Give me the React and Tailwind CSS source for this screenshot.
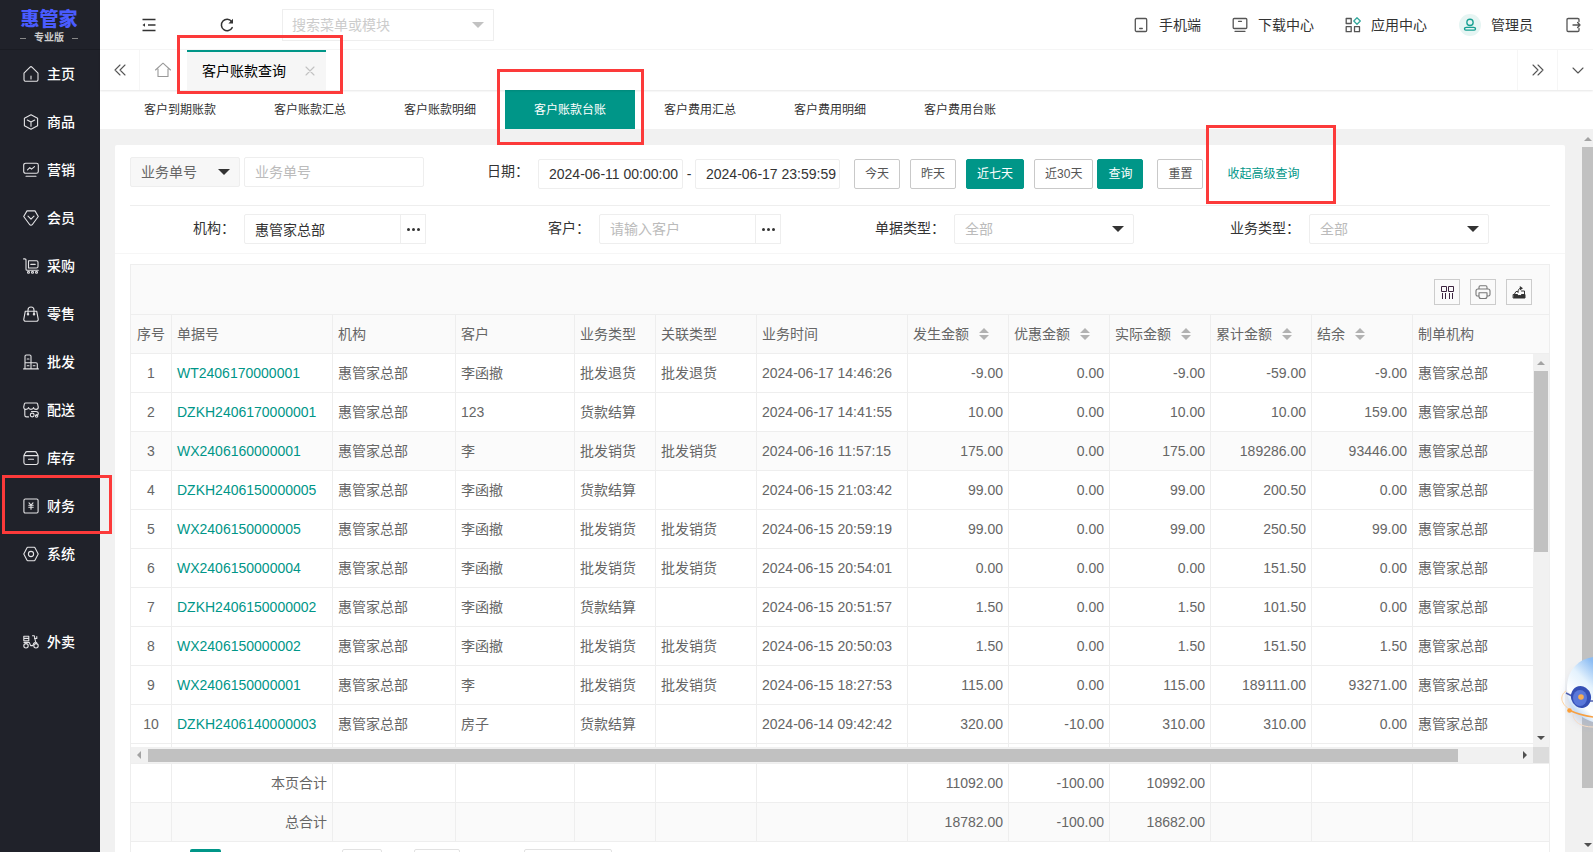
import { useState } from 'react';

const Icon = ({ size = 16, width = 1.1, className = '', children }) => (
    <svg
        width={size}
        height={size}
        viewBox="0 0 16 16"
        fill="none"
        stroke="currentColor"
        strokeWidth={width}
        strokeLinecap="round"
        strokeLinejoin="round"
        className={`shrink-0 ${className}`}
        aria-hidden="true"
    >
        {children}
    </svg>
);

const menus = [
    {
        name: '主页',
        icon: <path d="M1 7.2 6.8 1.3a1.7 1.7 0 0 1 2.4 0L15 7.2v6.3a1.8 1.8 0 0 1-1.8 1.8H2.8a1.8 1.8 0 0 1-1.8-1.8ZM8 10v3" />,
    },
    {
        name: '商品',
        icon: <path d="M8 .8 14.6 4.3v7.4L8 15.3 1.4 11.7V4.3ZM4.3 6 8 8.1 11.7 6M8 8.1v4.2" />,
    },
    {
        name: '营销',
        icon: <path d="M2.6 1.2h10.8a1.9 1.9 0 0 1 1.9 1.9v6.3a1.9 1.9 0 0 1-1.9 1.9H2.6A1.9 1.9 0 0 1 .7 9.4V3.1a1.9 1.9 0 0 1 1.9-1.9ZM4.5 7.8l2.3-2.2 1.7 1.5L11.5 4.6M3 14.2h10" />,
    },
    {
        name: '会员',
        icon: <path d="M4 .9h8l3.3 5.6-5.9 8a1.7 1.7 0 0 1-2.8 0l-5.9-8ZM5 6.2 8 9.2l3-3" />,
    },
    {
        name: '采购',
        icon: (
            <>
                <path d="M.6.9h1.2c.8 0 1.2.4 1.2 1.2v9.2c0 .6.4 1 1 1h11.3M5.5 2.7h8c.9 0 1.5.6 1.5 1.5v4.3c0 .9-.6 1.5-1.5 1.5h-8ZM7.8 6.4h4.4" />
                <circle cx="5.5" cy="14.3" r="1" />
                <circle cx="9.5" cy="14.3" r="1" />
                <circle cx="13.5" cy="14.3" r="1" />
            </>
        ),
    },
    {
        name: '零售',
        icon: (
            <>
                <path d="M2.3 5.2h11.4l1.5 7.9a1.8 1.8 0 0 1-1.8 2.2H2.6a1.8 1.8 0 0 1-1.8-2.2ZM5 8V4a3 3 0 0 1 6 0v4" />
                <circle cx="5" cy="8.3" r=".7" />
                <circle cx="11" cy="8.3" r=".7" />
            </>
        ),
    },
    {
        name: '批发',
        icon: <path d="M.6 14.9h14.8M2 14.9V2.3c0-.8.5-1.3 1.3-1.3h3.4C7.5 1 8 1.5 8 2.3v12.6M2 8.8h11c.8 0 1.3.5 1.3 1.3v4.8M4.200 5h1.8M4.200 11.800h1.800M10.200 11.800h1.800" />,
    },
    {
        name: '配送',
        icon: (
            <>
                <path d="M1.8 7.6v5.600c0 1 .6 1.700 1.700 1.700h2M2.600 1h10.800c.6 0 1 .3 1.200.9l.7 3.200c0 1.400-1 2.300-2.200 2.300S10.600 6.600 10.500 5.500C10.300 6.600 9.300 7.400 8 7.400s-2.300-.8-2.500-1.900C5.300 6.600 4.300 7.400 3 7.400S.7 6.500.7 5.100l.7-3.200c.2-.6.6-.9 1.200-.9ZM8.500 9.500h4.500c1.400 0 2.300.9 2.300 2.100 0 1.300-1.200 1.800-2.300 1.800" />
                <circle cx="9.2" cy="13" r="1.900" />
                <circle cx="13.600" cy="14" r="1.200" />
            </>
        ),
    },
    {
        name: '库存',
        icon: <path d="M.9 5.600h14.200v7a1.900 1.900 0 0 1-1.900 1.900H2.800a1.900 1.900 0 0 1-1.900-1.900ZM.9 5.600 2.400 2.700c.3-.7.9-1.100 1.700-1.100h7.800c.8 0 1.400.4 1.700 1.100l1.500 2.900M5.500 9.300h5" />,
    },
    {
        name: '财务',
        icon: <path d="M2.300 1h11.400c.9 0 1.400.5 1.400 1.400v11.200c0 .9-.5 1.400-1.400 1.400H2.300c-.9 0-1.400-.5-1.400-1.400V2.400C.9 1.500 1.400 1 2.300 1ZM6 4.800 8 7l2-2.200M5.800 7.300h4.400M5.800 9.300h4.400M8 7v4.200" />,
    },
    {
        name: '系统',
        icon: (
            <>
                <path d="M4.800 1.300h6.400c.4 0 .7.2.9.6L15.200 8l-3.100 6.100c-.2.4-.5.6-.9.6H4.800c-.4 0-.7-.2-.9-.6L.8 8l3.100-6.100c.2-.4.5-.6.9-.6Z" />
                <circle cx="8" cy="8" r="2.600" />
            </>
        ),
    },
    {
        name: '外卖',
        icon: (
            <>
                <path d="M.8 2.200h5v4.500h-5ZM.8 4.400h5M1 8.400h4.500c1 0 1.300.8 1.500 1.700l.6 1.500h2.200c.3-2.200 1.300-3.200 2.800-3.600L11.300 1.800H9.500M11.500 4.500h2.300v-2M12.600 8l1.200 1" />
                <circle cx="3" cy="11.800" r="2.200" />
                <circle cx="13" cy="11.800" r="2.200" />
            </>
        ),
    },
];

const subTabs = ['客户到期账款', '客户账款汇总', '客户账款明细', '客户账款台账', '客户费用汇总', '客户费用明细', '客户费用台账'];

const columns = [
    { title: '序号', align: 'text-center' },
    { title: '单据号' },
    { title: '机构' },
    { title: '客户' },
    { title: '业务类型' },
    { title: '关联类型' },
    { title: '业务时间' },
    { title: '发生金额', sort: true, align: 'text-right' },
    { title: '优惠金额', sort: true, align: 'text-right' },
    { title: '实际金额', sort: true, align: 'text-right' },
    { title: '累计金额', sort: true, align: 'text-right' },
    { title: '结余', sort: true, align: 'text-right' },
    { title: '制单机构' },
];

const rows = [
    ['1', 'WT2406170000001', '惠管家总部', '李函撤', '批发退货', '批发退货', '2024-06-17 14:46:26', '-9.00', '0.00', '-9.00', '-59.00', '-9.00', '惠管家总部'],
    ['2', 'DZKH2406170000001', '惠管家总部', '123', '货款结算', '', '2024-06-17 14:41:55', '10.00', '0.00', '10.00', '10.00', '159.00', '惠管家总部'],
    ['3', 'WX2406160000001', '惠管家总部', '李', '批发销货', '批发销货', '2024-06-16 11:57:15', '175.00', '0.00', '175.00', '189286.00', '93446.00', '惠管家总部'],
    ['4', 'DZKH2406150000005', '惠管家总部', '李函撤', '货款结算', '', '2024-06-15 21:03:42', '99.00', '0.00', '99.00', '200.50', '0.00', '惠管家总部'],
    ['5', 'WX2406150000005', '惠管家总部', '李函撤', '批发销货', '批发销货', '2024-06-15 20:59:19', '99.00', '0.00', '99.00', '250.50', '99.00', '惠管家总部'],
    ['6', 'WX2406150000004', '惠管家总部', '李函撤', '批发销货', '批发销货', '2024-06-15 20:54:01', '0.00', '0.00', '0.00', '151.50', '0.00', '惠管家总部'],
    ['7', 'DZKH2406150000002', '惠管家总部', '李函撤', '货款结算', '', '2024-06-15 20:51:57', '1.50', '0.00', '1.50', '101.50', '0.00', '惠管家总部'],
    ['8', 'WX2406150000002', '惠管家总部', '李函撤', '批发销货', '批发销货', '2024-06-15 20:50:03', '1.50', '0.00', '1.50', '151.50', '1.50', '惠管家总部'],
    ['9', 'WX2406150000001', '惠管家总部', '李', '批发销货', '批发销货', '2024-06-15 18:27:53', '115.00', '0.00', '115.00', '189111.00', '93271.00', '惠管家总部'],
    ['10', 'DZKH2406140000003', '惠管家总部', '房子', '货款结算', '', '2024-06-14 09:42:42', '320.00', '-10.00', '310.00', '310.00', '0.00', '惠管家总部'],
];

const totals = [
    ['', '本页合计', '', '', '', '', '', '11092.00', '-100.00', '10992.00', '', '', ''],
    ['', '总合计', '', '', '', '', '', '18782.00', '-100.00', '18682.00', '', '', ''],
];

const Cols = () => (
    <colgroup>
        <col className="w-[41px]" />
        <col className="w-[161px]" />
        <col className="w-[123px]" />
        <col className="w-[119px]" />
        <col className="w-[81px]" />
        <col className="w-[101px]" />
        <col className="w-[151px]" />
        <col className="w-[101px]" />
        <col className="w-[101px]" />
        <col className="w-[101px]" />
        <col className="w-[101px]" />
        <col className="w-[101px]" />
        <col />
    </colgroup>
);

const cell = 'h-[39px] border-b border-r border-[#eee] px-[5px] whitespace-nowrap last:border-r-0';

const Caret = ({ className = 'text-[#333]' }) => (
    <svg width="12" height="6" viewBox="0 0 12 6" className={`pointer-events-none absolute right-[10px] top-1/2 -translate-y-1/2 ${className}`} aria-hidden="true">
        <path d="M0 0h12L6 6Z" fill="currentColor" />
    </svg>
);

const Arrow = ({ dir, className = 'text-[#505050]' }) => {
    const shapes = {
        up: 'M0 6 4 2l4 4Z',
        down: 'M0 2h8L4 6Z',
        left: 'M6 0v8L2 4Z',
        right: 'M2 0v8l4-4Z',
    };
    return (
        <svg width="8" height="8" viewBox="0 0 8 8" className={`shrink-0 ${className}`} aria-hidden="true">
            <path d={shapes[dir]} fill="currentColor" />
        </svg>
    );
};

const Sidebar = () => (
    <nav className="flex w-[100px] shrink-0 flex-col bg-[#20222a] text-white">
        <div className="flex h-[50px] flex-col items-center border-b border-[#1a1c23] pt-2 pr-[2px]">
            <div className="text-[19px] leading-[23px] font-black text-[#4a5cff]">惠管家</div>
            <div className="flex items-center gap-2 text-[10px] leading-[14px] font-bold text-[#ccc]">
                <span className="h-px w-[6px] bg-[#888]" />
                专业版
                <span className="h-px w-[6px] bg-[#888]" />
            </div>
        </div>
        {menus.map((m) => (
            <a
                key={m.name}
                href="#"
                className="flex h-12 items-center gap-2 pl-[23px] text-sm font-medium last:mt-10"
            >
                <Icon className="text-[#e4e4e6]">{m.icon}</Icon>
                {m.name}
            </a>
        ))}
    </nav>
);

const Header = () => (
    <header className="flex h-[50px] items-center border-b border-[#f6f6f6] bg-white text-sm text-[#333]">
        <button type="button" aria-label="收起菜单" className="ml-[41px]">
            <Icon width={1.5}>
                <path d="M1.5 2.5h13M7 8h7.5M1.5 13.5h13" strokeLinecap="butt" />
                <path d="M1.5 8 4 6.2v3.600Z" fill="currentColor" stroke="none" />
            </Icon>
        </button>
        <button type="button" aria-label="刷新" className="ml-[62px]">
            <Icon width={1.5}>
                <path d="M13.2 10.6A5.7 5.7 0 1 1 12.6 4.5" />
                <path d="M14 1.8v4.600H9.400Z" fill="currentColor" stroke="none" />
            </Icon>
        </button>
        <div className="relative ml-[47px]">
            <input
                aria-label="搜索菜单或模块"
                placeholder="搜索菜单或模块"
                className="h-8 w-[212px] border border-[#eee] pr-8 pl-[9px] text-sm outline-none placeholder:text-[#ccc]"
            />
            <Caret className="text-[#c2c2c2]" />
        </div>
        <div className="ml-auto flex items-center pr-3">
            <a href="#" className="flex items-center gap-[10px]">
                <Icon width={1.3} className="text-[#555]">
                    <path d="M3.5 1.500h9c.7 0 1.200.5 1.200 1.200v10.600c0 .7-.5 1.200-1.200 1.200h-9c-.7 0-1.200-.5-1.200-1.200V2.700c0-.7.5-1.200 1.200-1.200ZM6.700 11.500h2.600" />
                </Icon>
                手机端
            </a>
            <a href="#" className="ml-[31px] flex items-center gap-[10px]">
                <Icon width={1.3} className="text-[#555]">
                    <path d="M2.200 1.500h11.600c.7 0 1 .4 1 1v8c0 .7-.4 1-1 1H2.200c-.7 0-1-.4-1-1v-8c0-.7.4-1 1-1ZM6.500 4.300h3M3 14.300h10" />
                </Icon>
                下载中心
            </a>
            <a href="#" className="ml-[31px] flex items-center gap-[10px]">
                <Icon width={1.3} className="text-[#555]">
                    <path d="M1.200 1.500h5v5h-5ZM1.200 9.700h5v5h-5ZM9.500 9.700h5v5h-5Z" />
                    <path d="M12 .8 15.300 4 12 7.200 8.800 4Z" stroke="#36a99e" />
                </Icon>
                应用中心
            </a>
            <a href="#" className="ml-8 flex items-center gap-[10px]">
                <span className="flex h-[22px] w-[22px] items-center justify-center rounded-full bg-[#e6f5f3] text-[#16a092]">
                    <Icon size={14} width={1.5}>
                        <circle cx="8" cy="5" r="3.600" />
                        <path d="M4 10.700h8c1.500 0 2.300.8 2.300 1.800 0 .9-.6 1.300-1.500 1.300H3.200c-.9 0-1.500-.4-1.500-1.300 0-1 .8-1.800 2.300-1.800Z" />
                    </Icon>
                </span>
                管理员
            </a>
            <button type="button" aria-label="退出" className="ml-8">
                <Icon width={1.3} className="text-[#555]">
                    <path d="M14 4.500V2.700c0-.8-.5-1.200-1.200-1.200H3.200C2.500 1.500 2 1.900 2 2.700v10.600c0 .8.5 1.200 1.200 1.200h9.600c.7 0 1.200-.4 1.200-1.200v-1.800M8 8h7M12.600 5.500 15 8l-2.400 2.500" />
                </Icon>
            </button>
        </div>
    </header>
);

const TabBar = () => (
    <div className="relative z-10 flex h-10 bg-white text-sm shadow-[0_1px_2px_rgba(0,0,0,0.1)]">
        <button type="button" aria-label="向左" className="flex w-10 items-center justify-center border-r border-[#f6f6f6] text-[#555]">
            <Icon>
                <path d="M8 3 3 8l5 5M13 3 8 8l5 5" />
            </Icon>
        </button>
        <button type="button" aria-label="首页" className="flex w-[47px] items-center justify-center pr-[2px] text-[#999]">
            <Icon>
                <path d="M.5 8 8 1.200 15.500 8M3 7v7.500h10V7" />
            </Icon>
        </button>
        <div className="flex w-[139px] items-center border-t-2 border-[#009688] bg-[#f6f6f6] pl-[15px] text-black">
            客户账款查询
            <button type="button" aria-label="关闭" className="ml-4 text-[#c2c2c2]">
                <Icon>
                    <path d="M4 4l8 8M12 4l-8 8" />
                </Icon>
            </button>
        </div>
        <button type="button" aria-label="向右" className="ml-auto flex w-10 items-center justify-center border-l border-[#f6f6f6] text-[#555]">
            <Icon>
                <path d="M3 3l5 5-5 5M8 3l5 5-5 5" />
            </Icon>
        </button>
        <button type="button" aria-label="更多" className="flex w-9 items-center justify-center border-l border-[#f6f6f6] pl-1 text-[#555]">
            <Icon>
                <path d="M3 6l5 5 5-5" />
            </Icon>
        </button>
    </div>
);

const fieldBox = 'h-[30px] rounded-[2px] border border-[#eee] bg-white text-sm outline-none placeholder:text-[#bbb]';
const plainBtn = 'h-[30px] rounded-[2px] border border-[#c9c9c9] bg-white px-[10px] text-xs text-[#555]';
const mainBtn = 'h-[30px] rounded-[2px] border border-[#009688] bg-[#009688] px-[10px] text-xs text-white';

const Field = ({ id, label, children }) => (
    <div className="flex">
        <label htmlFor={id} className="w-[114px] shrink-0 pr-[9px] text-right leading-[28px]">
            {label}：
        </label>
        {children}
    </div>
);

const PickerField = ({ id, label, value, placeholder }) => (
    <Field id={id} label={label}>
        <input id={id} defaultValue={value} placeholder={placeholder} className={`${fieldBox} w-[157px] rounded-r-none px-[10px]`} />
        <button type="button" aria-label={`选择${label}`} className="-ml-px flex h-[30px] w-[26px] items-center justify-center gap-[2px] border border-[#eee]">
            <i className="h-[3px] w-[3px] rounded-full bg-[#333]" />
            <i className="h-[3px] w-[3px] rounded-full bg-[#333]" />
            <i className="h-[3px] w-[3px] rounded-full bg-[#333]" />
        </button>
    </Field>
);

const SelectField = ({ id, label }) => (
    <Field id={id} label={label}>
        <div className="relative h-[30px]">
            <select id={id} className={`${fieldBox} w-[180px] appearance-none px-[10px] text-[#bbb]`}>
                <option>全部</option>
            </select>
            <Caret />
        </div>
    </Field>
);

const Filters = () => {
    const [range, setRange] = useState('近七天');
    const rangeBtn = (name) => (
        <button type="button" onClick={() => setRange(name)} className={range === name ? mainBtn : plainBtn}>
            {name}
        </button>
    );

    return (
        <form className="border-b border-[#f6f6f6] px-[15px] text-sm text-[#333]">
            <div className="flex h-[61px] border-b border-[#eee] pt-3">
                <div className="relative h-[30px]">
                    <select aria-label="单号类型" className="h-[30px] w-[110px] appearance-none rounded-[2px] border border-[#eee] bg-[#f7f7f7] px-[10px] text-sm text-[#666] outline-none">
                        <option>业务单号</option>
                    </select>
                    <Caret />
                </div>
                <input aria-label="业务单号" placeholder="业务单号" className={`${fieldBox} ml-1 w-[180px] px-[10px]`} />
                <Field id="start" label="日期">
                    <div className="flex items-center self-start pt-[2px]">
                        <input id="start" defaultValue="2024-06-11 00:00:00" className={`${fieldBox} w-[145px] pl-[10px]`} />
                        <span className="w-3 text-center">-</span>
                        <input aria-label="结束日期" defaultValue="2024-06-17 23:59:59" className={`${fieldBox} w-[145px] pl-[10px]`} />
                    </div>
                </Field>
                <div className="ml-[14px] flex items-center gap-[10px] self-start pt-[2px]">
                    {rangeBtn('今天')}
                    {rangeBtn('昨天')}
                    {rangeBtn('近七天')}
                    {rangeBtn('近30天')}
                </div>
                <div className="ml-1 flex items-center gap-[14px] self-start pt-[2px]">
                    <button type="button" className={mainBtn}>查询</button>
                    <button type="reset" className={plainBtn}>重置</button>
                    <a href="#" className="ml-[10px] text-xs text-[#009688]">收起高级查询</a>
                </div>
            </div>
            <div className="grid grid-cols-4 pt-2 pb-[9px]">
                <PickerField id="org" label="机构" value="惠管家总部" />
                <PickerField id="customer" label="客户" placeholder="请输入客户" />
                <SelectField id="billType" label="单据类型" />
                <SelectField id="bizType" label="业务类型" />
            </div>
        </form>
    );
};

const toolBtn = 'flex h-[26px] w-[26px] items-center justify-center border border-[#ccc] text-[#333]';

const DataTable = () => (
    <div className="mx-[15px] mt-[10px] border border-[#eee] text-sm text-[#666]">
        <div className="flex h-[50px] items-center justify-end gap-[10px] border-b border-[#eee] bg-[#fafafa] pt-1 pr-[17px]">
            <button type="button" aria-label="筛选列" className={toolBtn}>
                <Icon width={1} className="text-[#3d2440]">
                    <path d="M2.500 2.500h5v5h-5ZM9.500 2.500h5v5h-5ZM3.500 9v6M6.500 9v6M10.500 9v6M13.500 9v6" strokeLinecap="butt" strokeLinejoin="miter" />
                </Icon>
            </button>
            <button type="button" aria-label="打印" className={toolBtn}>
                <Icon className="text-[#777]">
                    <path d="M4 5V3.200C4 2.300 4.500 1.800 5.300 1.800h5.400c.8 0 1.300.5 1.300 1.400V5M4 12H2.600C1.600 12 1 11.400 1 10.500V7c0-1.300.7-2 2-2h10c1.300 0 2 .7 2 2v3.500c0 .9-.6 1.500-1.600 1.500H12M4 8.800h8v3.700c0 1.400-.7 2-2 2H6c-1.300 0-2-.6-2-2Z" />
                </Icon>
            </button>
            <button type="button" aria-label="导出" className={toolBtn}>
                <Icon width={1}>
                    <path d="M2.500 10.500h4l1 1h2l1-1h3.500v3.500H2.500Z" fill="currentColor" />
                    <path d="M3.500 10 5 7.500h1.500M10.500 7h3v3.500M7 8.500c0-3 .8-4 2.500-4.300" />
                    <path d="M8.800 2 12 4.200 8.800 6.400Z" fill="currentColor" stroke="none" />
                </Icon>
            </button>
        </div>
        <table className="w-full table-fixed border-separate border-spacing-0 bg-[#fafafa]">
            <Cols />
            <thead>
                <tr>
                    {columns.map((c) => (
                        <th key={c.title} className={`${cell} text-left font-normal first:text-center`}>
                            <span className="inline-flex items-center gap-[10px]">
                                {c.title}
                                {c.sort && (
                                    <svg width="10" height="12" viewBox="0 0 10 12" fill="#b2b2b2" aria-hidden="true">
                                        <path d="M0 5h10L5 0ZM0 7h10l-5 5Z" />
                                    </svg>
                                )}
                            </span>
                        </th>
                    ))}
                </tr>
            </thead>
        </table>
        <div className="flex h-[393px]">
            <div className="flex-1 overflow-hidden">
                <table className="w-full table-fixed border-separate border-spacing-0">
                    <Cols />
                    <tbody>
                        {rows.map((row, r) => (
                            <tr key={row[1]} className={r === 2 ? 'bg-[#fbfbfb]' : 'bg-white'}>
                                {row.map((text, i) => (
                                    <td key={i} className={`${cell} ${columns[i].align || ''}`}>
                                        {i === 1 ? <a href="#" className="text-[#009688]">{text}</a> : text}
                                    </td>
                                ))}
                            </tr>
                        ))}
                        <tr>
                            {columns.map((c) => (
                                <td key={c.title} className={cell} />
                            ))}
                        </tr>
                    </tbody>
                </table>
            </div>
            <div className="flex w-4 flex-col items-center bg-[#f1f1f1] pt-[5px] pb-[5px]">
                <Arrow dir="up" className="text-[#a3a3a3]" />
                <div className="mt-1 h-[181px] w-[14px] bg-[#c1c1c1]" />
                <Arrow dir="down" className="mt-auto text-[#505050]" />
            </div>
        </div>
        <div className="flex h-[17px] border-b border-[#eee]">
            <div className="flex flex-1 items-center bg-[#f1f1f1] px-1">
                <Arrow dir="left" className="text-[#a3a3a3]" />
                <div className="ml-[5px] h-[13px] w-[94%] bg-[#c1c1c1]" />
                <Arrow dir="right" className="ml-auto text-[#505050]" />
            </div>
            <div className="w-4 bg-[#dcdcdc]" />
        </div>
        <table className="w-full table-fixed border-separate border-spacing-0">
            <Cols />
            <tbody>
                {totals.map((row, r) => (
                    <tr key={row[1]} className={r === 1 ? 'bg-[#fafafa]' : 'bg-white'}>
                        {row.map((text, i) => (
                            <td key={i} className={`${cell} text-right`}>
                                {text}
                            </td>
                        ))}
                    </tr>
                ))}
            </tbody>
        </table>
        <div className="flex pt-[7px] pl-[59px] text-xs">
            <button type="button" aria-label="第1页" className="h-[26px] w-[31px] rounded-[2px] bg-[#009688]" />
            <input aria-label="页码" className="ml-[121px] h-[26px] w-10 rounded-[2px] border border-[#e2e2e2]" />
            <button type="button" aria-label="确定" className="ml-8 h-[26px] w-[46px] rounded-[2px] border border-[#e2e2e2]" />
            <select aria-label="每页条数" className="ml-16 h-[26px] w-[88px] appearance-none rounded-[2px] border border-[#e2e2e2]" />
        </div>
    </div>
);

const Robot = () => (
    <svg width="34" height="80" viewBox="0 0 34 80" className="absolute top-[652px] right-0" aria-hidden="true">
        <defs>
            <linearGradient id="head" x1="0.8" y1="0" x2="0.4" y2="1">
                <stop offset="0" stopColor="#8dbdf3" />
                <stop offset="0.35" stopColor="#e4f2fd" />
                <stop offset="0.7" stopColor="#ffffff" />
                <stop offset="1" stopColor="#9cc6f2" />
            </linearGradient>
            <filter id="glow" x="-50%" y="-50%" width="200%" height="200%">
                <feGaussianBlur stdDeviation="4" />
            </filter>
        </defs>
        <ellipse cx="34" cy="44" rx="26" ry="30" fill="#8fa8d8" opacity="0.35" filter="url(#glow)" />
        <path d="M34 5C17 8 8 20 8 36c0 18 10 29 26 34Z" fill="url(#head)" />
        <path d="M7 41l6 3M31 49h3" stroke="#5262b0" strokeWidth="1.5" />
        <ellipse cx="22" cy="45" rx="10" ry="11" fill="#3650b5" transform="rotate(-15 22 45)" />
        <ellipse cx="21" cy="46" rx="7" ry="8" fill="#5a78da" />
        <circle cx="22" cy="45" r="2.800" fill="#f8ad52" />
        <path d="M7 39c-6 4-6 12 3 18" fill="none" stroke="#ffd3a0" strokeWidth="1" />
        <path d="M10 58c8 4 16 6 24 7" fill="none" stroke="#f7a043" strokeWidth="1.5" />
        <path d="M14 62c0 8 8 13 20 13" fill="none" stroke="#f6dcc6" strokeWidth="1" />
        <circle cx="10.500" cy="58.500" r="2.300" fill="#fb9f38" />
    </svg>
);

// red frames that point out the steps
const Marks = () => (
    <div className="pointer-events-none absolute inset-0 z-20">
        <div className="absolute top-[35px] left-[177px] h-[59px] w-[166px] border-[3px] border-[#fc3a3a]" />
        <div className="absolute top-[69px] left-[497px] h-[76px] w-[147px] border-[3px] border-[#fc3a3a]" />
        <div className="absolute top-[125px] left-[1206px] h-[79px] w-[130px] border-[3px] border-[#fc3a3a]" />
        <div className="absolute top-[475px] left-[2px] h-[59px] w-[110px] border-[3px] border-[#fc3a3a]" />
    </div>
);

const App = () => {
    const [tab, setTab] = useState('客户账款台账');

    return (
        <div lang="zh-CN" className="relative flex h-screen overflow-hidden bg-[#f1f1f1] font-['Liberation_Sans','Noto_Sans_CJK_SC',sans-serif]">
            <Sidebar />
            <div className="flex min-w-0 flex-1 flex-col">
                <Header />
                <TabBar />
                <div className="flex h-[39px] shrink-0 bg-white pl-[15px] text-xs text-[#333]">
                    {subTabs.map((name) => (
                        <button
                            key={name}
                            type="button"
                            onClick={() => setTab(name)}
                            className={tab === name ? 'w-[130px] bg-[#009688] text-white' : 'w-[130px]'}
                        >
                            {name}
                        </button>
                    ))}
                </div>
                <div className="flex min-h-0 flex-1">
                    <main className="min-w-0 flex-1 overflow-hidden pt-4 pr-[17px] pl-[15px]">
                        <div className="rounded-[2px] bg-white pb-4">
                            <Filters />
                            <DataTable />
                        </div>
                    </main>
                    <div className="flex w-[11px] flex-col items-center overflow-hidden bg-[#f1f1f1] pt-[6px] pb-[3px]">
                        <Arrow dir="up" className="text-[#a3a3a3]" />
                        <div className="mt-1 h-[641px] w-full bg-[#c1c1c1]" />
                        <Arrow dir="down" className="mt-auto text-[#505050]" />
                    </div>
                </div>
            </div>
            <Robot />
            <Marks />
        </div>
    );
};

export default App;
